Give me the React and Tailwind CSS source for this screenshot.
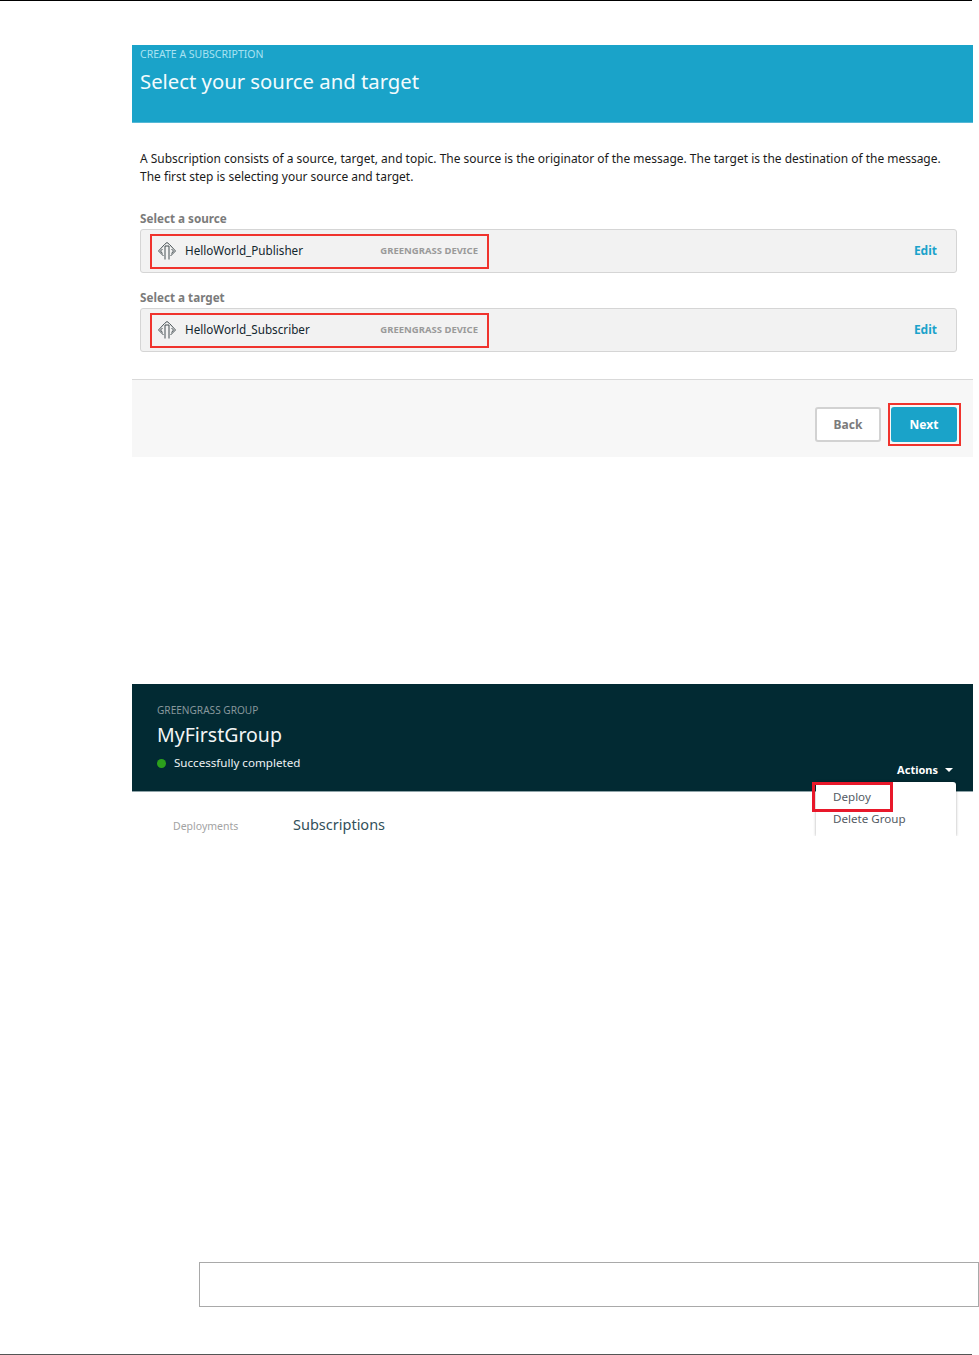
function DeviceIcon() {
  return (
    <svg width="20" height="20" viewBox="0 0 20 20" fill="none" stroke="#454f53" strokeWidth="1" className="-ml-px shrink-0">
      <path d="M7.500 3.500L10 1.500l2.500 2 6 6.500-5 5M7.500 3.500l-6 6.500 5 5" />
      <path d="M8 5v13.500M12 5v13.500M8 5h4" />
      <path d="M5.500 8L3.500 10l2 2.500M14.500 8l2 2-2 2.500" />
    </svg>
  );
}

function DeviceRow({ label, name }) {
  return (
    <div>
      <div className="h-[21px] pl-2 text-[11.700px] leading-[21px] font-bold text-[#7b7b7b]">{label}</div>
      <div className="ml-2 flex h-[44px] w-[817px] items-center justify-between rounded-[3px] border border-[#d5d5d5] bg-[#f2f2f2] pr-[19px] pl-[9px]">
        <div className="flex h-[35px] w-[339px] items-center border-2 border-[#f0332d] pr-[9px] pl-[6px]">
          <DeviceIcon />
          <span className="ml-[8px] flex-1 text-[11.700px] text-[#12262e]">{name}</span>
          <span className="text-[9.500px] font-bold text-[#9a9a9a]">GREENGRASS DEVICE</span>
        </div>
        <a className="text-[12px] font-bold text-[#1ba3cb]">Edit</a>
      </div>
    </div>
  );
}

function SubscriptionPanel() {
  return (
    <section className="ml-[132px] w-[841px]">
      <div className="h-[78px] border-b border-[#55b8d6] bg-[#1aa3c9] px-2">
        <div className="text-[10.500px] leading-[19px] text-[#a8e2f2]">CREATE A SUBSCRIPTION</div>
        <h1 className="mt-[3px] text-[20.300px] leading-[28px] text-[#f3fbfd]">Select your source and target</h1>
      </div>
      <p className="mt-[27px] px-2 text-[11.970px] leading-[18px] whitespace-nowrap text-[#1b1b1b]">
        A Subscription consists of a source, target, and topic. The source is the originator of the message. The target is the destination of the message.
        <br />
        The first step is selecting your source and target.
      </p>
      <div className="mt-[22px] flex flex-col gap-[14px]">
        <DeviceRow label="Select a source" name="HelloWorld_Publisher" />
        <DeviceRow label="Select a target" name="HelloWorld_Subscriber" />
      </div>
      <div className="mt-[27px] flex h-[78px] items-center justify-end gap-[10px] border-t border-[#d9d9d9] bg-[#f7f7f7] pt-[12px] pr-[16px]">
        <button className="h-[35px] w-[66px] rounded-[3px] border-2 border-[#d2d2d2] bg-white text-[12px] font-bold text-[#7b7b7b]">Back</button>
        <div className="relative">
          <button className="h-[35px] w-[66px] rounded-[3px] bg-[#1aa3c9] text-[12px] font-bold text-white">Next</button>
          <div className="absolute -top-[4px] -left-[3px] h-[43px] w-[73px] border-2 border-[#f0332d]"></div>
        </div>
      </div>
    </section>
  );
}

function GroupPanel() {
  return (
    <section className="relative mt-[227px] ml-[132px] h-[152px] w-[841px] overflow-hidden">
      <div className="flex h-[108px] items-start justify-between border-b border-[#8fa3a8] bg-[#022a33] pl-[25px]">
        <div>
          <div className="mt-[19px] text-[10.100px] leading-[15px] text-[#87979c]">GREENGRASS GROUP</div>
          <h2 className="mt-[2px] text-[19.500px] leading-[30px] text-[#f2f5f5]">MyFirstGroup</h2>
          <div className="mt-[4px] flex items-center text-[11.600px] leading-[18px] text-[#eef2f3]">
            <span className="mr-[8px] h-[9px] w-[9px] rounded-full bg-[#2ca01c]"></span>
            Successfully completed
          </div>
        </div>
        <div className="mt-[78px] mr-[20px] flex items-center gap-[7px] text-[11px] leading-[16px] font-bold text-white">
          Actions
          <span className="h-0 w-0 border-x-[4px] border-t-[4px] border-x-transparent border-t-white"></span>
        </div>
      </div>
      <div className="flex items-center pt-[18px] pl-[41px]">
        <span className="mt-[8px] w-[120px] text-[10.500px] leading-[16px] text-[#a3a3a3]">Deployments</span>
        <span className="mt-[4px] text-[14.500px] leading-[20px] text-[#33505a]">Subscriptions</span>
      </div>
      {/* dropdown, cut off by the screenshot */}
      <div className="absolute top-[98px] right-[17px] h-[54px] w-[140px] rounded-t-[3px] bg-white pt-[4px] pl-[17px] text-[11.600px] leading-[22px] text-[#545b64] shadow-[0_0_3px_rgba(0,0,0,0.35)]">
        <div>Deploy</div>
        <div>Delete Group</div>
      </div>
      <div className="absolute top-[98px] left-[680px] h-[30px] w-[81px] border-[3px] border-[#e8182a]"></div>
    </section>
  );
}

export default function App() {
  return (
    <div className="relative h-[1355px] w-[979px] overflow-hidden bg-white font-['Noto_Sans',sans-serif]">
      <div className="mr-[7px] h-px bg-black"></div>
      <div className="h-[44px]"></div>
      <SubscriptionPanel />
      <GroupPanel />
      <div className="mt-[426px] ml-[199px] h-[45px] w-[780px] border border-[#a9a9a9]"></div>
      <div className="mt-[47px] mr-[7px] h-px bg-[#555555]"></div>
    </div>
  );
}
